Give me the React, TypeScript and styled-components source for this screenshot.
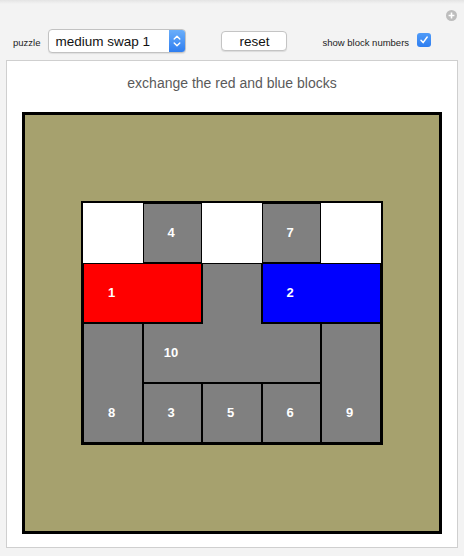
import React from "react";
import styled, { createGlobalStyle, css } from "styled-components";

const CELL_W = 59.5;
const CELL_H = 60;

const GlobalStyle = createGlobalStyle`
	html, body {
		margin: 0;
		padding: 0;
		background: #f3f3f3;
		font-family: "Liberation Sans", Arial, sans-serif;
	}
`;

const Page = styled.div`
	width: 464px;
	height: 556px;
	box-sizing: border-box;
	background: linear-gradient(#e4e4e4 0, #f3f3f3 4px);
	overflow: hidden;
`;

const IconRow = styled.div`
	display: flex;
	justify-content: flex-end;
	height: 29px;
	box-sizing: border-box;
	padding: 10px 7px 0 0;
`;

const Toolbar = styled.div`
	display: flex;
	align-items: center;
	height: 24px;
	padding-left: 13px;
`;

const SmallLabel = styled.span`
	font-size: 9.5px;
	color: #222;
	margin-top: 2px;
`;

const SelectBox = styled.div`
	display: flex;
	align-items: stretch;
	width: 138px;
	height: 24px;
	box-sizing: border-box;
	margin-left: 8px;
	border: 1px solid #c2c2c2;
	border-radius: 4px;
	background: #fff;
	box-shadow: 0 1px 1px rgba(0, 0, 0, 0.08);
	overflow: hidden;
`;

const SelectText = styled.span`
	flex: 1;
	display: flex;
	align-items: center;
	padding-left: 6px;
	font-size: 13.5px;
	color: #111;
`;

const Stepper = styled.span`
	width: 16px;
	display: flex;
	align-items: center;
	justify-content: center;
	background: linear-gradient(#6aaefa, #2f7ef0);
`;

const ResetButton = styled.button`
	width: 66px;
	height: 20px;
	margin-left: 35px;
	padding: 0;
	border: 1px solid #c4c4c4;
	border-radius: 4px;
	background: #fff;
	box-shadow: 0 1px 1px rgba(0, 0, 0, 0.1);
	font-family: inherit;
	font-size: 13.5px;
	color: #111;
`;

const NumbersLabel = styled(SmallLabel)`
	margin-left: 35px;
`;

const CheckBox = styled.span`
	width: 14px;
	height: 14px;
	margin-left: 8px;
	border-radius: 3px;
	background: linear-gradient(#4f9bf8, #2f7ef0);
	display: flex;
	align-items: center;
	justify-content: center;
	margin-top: -2px;
`;

const Panel = styled.div`
	margin: 7px 6px 0;
	height: 488px;
	box-sizing: border-box;
	background: #fff;
	border: 1px solid #cfcfcf;
	display: flex;
	flex-direction: column;
	align-items: center;
`;

const Title = styled.div`
	margin-top: 14px;
	font-size: 14px;
	line-height: 17px;
	color: #5a5a5a;
`;

const Board = styled.div`
	margin-top: 20px;
	width: 420px;
	height: 422px;
	box-sizing: border-box;
	border: 3px solid #000;
	background: #a6a16e;
	display: flex;
	align-items: center;
	justify-content: center;
`;

const Grid = styled.div`
	display: grid;
	grid-template-columns: repeat(5, ${CELL_W}px);
	grid-template-rows: repeat(4, ${CELL_H}px);
	border: 2px solid #000;
	background: #fff;
`;

type Part = "full" | "stem" | "bar";

const partShadow: Record<Part, ReturnType<typeof css>> = {
	full: css`
		box-shadow: inset 0 0 0 1px #000;
	`,
	stem: css`
		box-shadow: inset 1px 0 0 #000, inset -1px 0 0 #000, inset 0 1px 0 #000;
	`,
	bar: css`
		box-shadow: inset 1px 0 0 #000, inset -1px 0 0 #000, inset 0 -1px 0 #000;
		background-image: linear-gradient(
			to right,
			#000 0,
			#000 ${CELL_W + 1}px,
			transparent ${CELL_W + 1}px,
			transparent ${CELL_W * 2 - 1}px,
			#000 ${CELL_W * 2 - 1}px
		);
		background-size: 100% 1px;
		background-repeat: no-repeat;
	`,
};

const Block = styled.div<{
	$col: number;
	$row: number;
	$w: number;
	$h: number;
	$color: string;
	$part: Part;
}>`
	grid-column: ${(p) => p.$col} / span ${(p) => p.$w};
	grid-row: ${(p) => p.$row} / span ${(p) => p.$h};
	background-color: ${(p) => p.$color};
	display: flex;
	align-items: flex-end;
	justify-content: flex-start;
	${(p) => partShadow[p.$part]}
`;

// number sits in the bottom-left cell of its block
const BlockNumber = styled.span`
	width: ${CELL_W - 3}px;
	height: ${CELL_H - 2}px;
	margin-bottom: 2px;
	display: flex;
	align-items: center;
	justify-content: center;
	color: #fff;
	font-weight: bold;
	font-size: 13px;
`;

const GRAY = "#808080";

const blocks: {
	label?: string;
	col: number;
	row: number;
	w: number;
	h: number;
	color: string;
	part: Part;
}[] = [
	{ label: "4", col: 2, row: 1, w: 1, h: 1, color: GRAY, part: "full" },
	{ label: "7", col: 4, row: 1, w: 1, h: 1, color: GRAY, part: "full" },
	{ label: "1", col: 1, row: 2, w: 2, h: 1, color: "#ff0000", part: "full" },
	{ label: "2", col: 4, row: 2, w: 2, h: 1, color: "#0000ff", part: "full" },
	{ col: 3, row: 2, w: 1, h: 1, color: GRAY, part: "stem" },
	{ label: "10", col: 2, row: 3, w: 3, h: 1, color: GRAY, part: "bar" },
	{ label: "8", col: 1, row: 3, w: 1, h: 2, color: GRAY, part: "full" },
	{ label: "9", col: 5, row: 3, w: 1, h: 2, color: GRAY, part: "full" },
	{ label: "3", col: 2, row: 4, w: 1, h: 1, color: GRAY, part: "full" },
	{ label: "5", col: 3, row: 4, w: 1, h: 1, color: GRAY, part: "full" },
	{ label: "6", col: 4, row: 4, w: 1, h: 1, color: GRAY, part: "full" },
];

const PlusIcon = () => (
	<svg width="11" height="11" viewBox="0 0 11 11">
		<circle cx="5.5" cy="5.5" r="5.5" fill="#bdbdbd" />
		<path d="M5.5 2.6v5.8M2.6 5.5h5.8" stroke="#fff" strokeWidth="1.6" />
	</svg>
);

const StepperIcon = () => (
	<svg width="8" height="14" viewBox="0 0 8 14">
		<path
			d="M1.2 5 4 2.2 6.8 5M1.2 9 4 11.8 6.8 9"
			fill="none"
			stroke="#fff"
			strokeWidth="1.4"
			strokeLinecap="round"
			strokeLinejoin="round"
		/>
	</svg>
);

const CheckIcon = () => (
	<svg width="10" height="10" viewBox="0 0 10 10">
		<path
			d="M2 5.3 4.1 7.6 8.2 2"
			fill="none"
			stroke="#fff"
			strokeWidth="1.5"
			strokeLinecap="round"
			strokeLinejoin="round"
		/>
	</svg>
);

export default function App() {
	return (
		<Page>
			<GlobalStyle />
			<IconRow>
				<PlusIcon />
			</IconRow>
			<Toolbar>
				<SmallLabel>puzzle</SmallLabel>
				<SelectBox>
					<SelectText>medium swap 1</SelectText>
					<Stepper>
						<StepperIcon />
					</Stepper>
				</SelectBox>
				<ResetButton>reset</ResetButton>
				<NumbersLabel>show block numbers</NumbersLabel>
				<CheckBox>
					<CheckIcon />
				</CheckBox>
			</Toolbar>
			<Panel>
				<Title>exchange the red and blue blocks</Title>
				<Board>
					<Grid>
						{blocks.map((b, i) => (
							<Block
								key={i}
								$col={b.col}
								$row={b.row}
								$w={b.w}
								$h={b.h}
								$color={b.color}
								$part={b.part}
							>
								{b.label && <BlockNumber>{b.label}</BlockNumber>}
							</Block>
						))}
					</Grid>
				</Board>
			</Panel>
		</Page>
	);
}
